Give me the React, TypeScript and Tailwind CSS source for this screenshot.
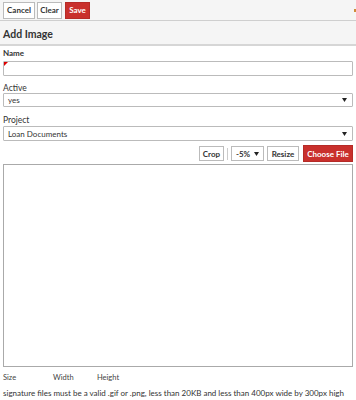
import React from "react";

const font = { fontFamily: 'Lato, "Open Sans", sans-serif' };

function Caret() {
  return (
    <svg width="5" height="4" viewBox="0 0 5 4" className="shrink-0">
      <path d="M0 0 L5 0 L2.5 4 Z" fill="#222" />
    </svg>
  );
}

export default function App() {
  return (
    <div className="w-[356px] h-[400px] bg-white text-[#333] overflow-hidden relative" style={font}>
      <div className="h-[21px] bg-[#f5f5f5] border-b border-[#cfcfcf] flex items-center px-[3px]">
        <button className="h-[17px] w-[32px] bg-white border border-[#bbb] text-[8px] font-bold text-[#333] leading-none">Cancel</button>
        <button className="h-[17px] w-[25px] bg-white border border-[#bbb] text-[8px] font-bold text-[#333] leading-none ml-[2px]">Clear</button>
        <button className="h-[17px] w-[25px] bg-[#c9302c] border border-[#b52b27] text-[8px] font-bold text-white leading-none ml-[3px]">Save</button>
      </div>
      <div className="absolute right-0 top-[9px] w-[2px] h-[3px] bg-[#d08a3a]" />
      <div className="h-[25px] bg-[#f5f5f5] border-b-2 border-[#d6d6d6] flex items-center px-[3px] pt-[2px]">
        <span className="text-[10.5px] font-bold text-[#333] leading-[12px]">Add Image</span>
      </div>
      <div className="px-[3px]">
        <div className="mt-[2px] h-[11px] text-[8px] font-bold leading-[11px] text-[#333]">Name</div>
        <div className="relative mt-[2px] h-[15px] border border-[#bbb] rounded-[1px] bg-white">
          <div className="absolute left-0 top-0 w-0 h-0 border-t-[4px] border-r-[4px] border-t-[#d00] border-r-transparent" />
        </div>
        <div className="mt-[7px] h-[10px] text-[8.5px] leading-[10px] text-[#333]">Active</div>
        <div className="h-[14px] border border-[#bbb] rounded-[1px] bg-white flex items-center justify-between pl-[4px] pr-[5px]">
          <span className="text-[8px] leading-[10px] text-[#333]">yes</span>
          <Caret />
        </div>
        <div className="mt-[8px] h-[10px] text-[8.5px] leading-[10px] text-[#333]">Project</div>
        <div className="mt-[1px] h-[15px] border border-[#bbb] rounded-[1px] bg-white flex items-center justify-between pl-[4px] pr-[5px]">
          <span className="text-[8px] leading-[10px] text-[#333]">Loan Documents</span>
          <Caret />
        </div>
        <div className="flex justify-end items-center mt-[4px] h-[17px]">
          <button className="h-[15px] w-[25px] bg-white border border-[#bbb] text-[8px] font-bold text-[#333] leading-none">Crop</button>
          <div className="w-px h-[12px] bg-[#ccc] mx-[3px]" />
          <div className="h-[15px] w-[33px] px-[4px] bg-white border border-[#bbb] flex items-center justify-between">
            <span className="text-[8px] leading-[10px] font-bold text-[#333]">-5%</span>
            <Caret />
          </div>
          <button className="ml-[3px] h-[15px] w-[32px] bg-white border border-[#bbb] text-[8px] font-bold text-[#333] leading-none">Resize</button>
          <button className="ml-[4px] h-[17px] w-[50px] bg-[#c9302c] border border-[#b52b27] text-[8px] font-bold text-white leading-none">Choose File</button>
        </div>
        <div className="mt-[2px] h-[203px] border border-[#aaa] bg-white" />
        <div className="flex text-[7.5px] text-[#444] mt-[6px] h-[10px] leading-[10px]">
          <span className="w-[50px]">Size</span>
          <span className="w-[44px]">Width</span>
          <span>Height</span>
        </div>
        <div className="text-[8px] text-[#333] mt-[5px] h-[10px] leading-[10px] whitespace-nowrap">
          signature files must be a valid .gif or .png, less than 20KB and less than 400px wide by 300px high
        </div>
      </div>
    </div>
  );
}
